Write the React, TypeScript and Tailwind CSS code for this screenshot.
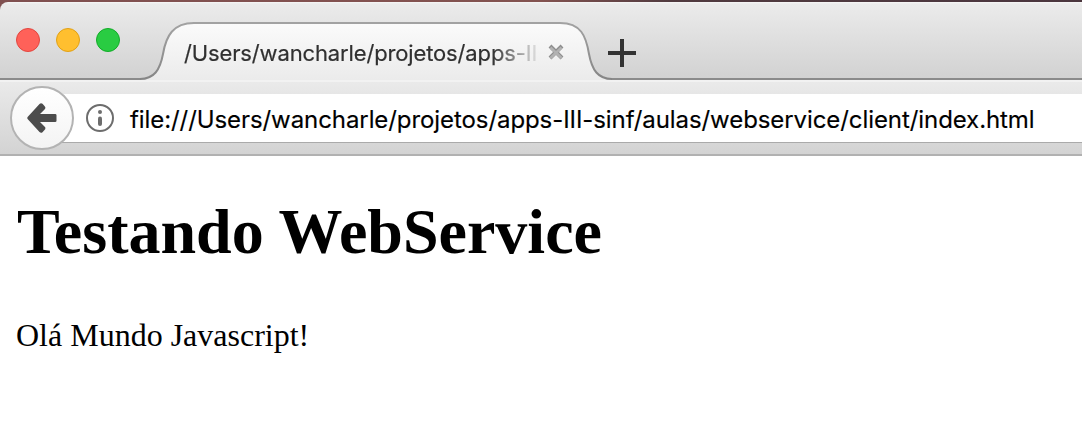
import React from "react";

function TrafficLights() {
  return (
    <div className="flex gap-4 pl-4 pt-[26px] w-[140px] shrink-0">
      <span className="size-6 rounded-full border border-[#e2463f] bg-[#ff6159]" />
      <span className="size-6 rounded-full border border-[#e1a116] bg-[#ffbf2f]" />
      <span className="size-6 rounded-full border border-[#12ac28] bg-[#29cc42]" />
    </div>
  );
}

function Tab() {
  return (
    <div className="relative h-[78px] w-[472px] shrink-0">
      <svg className="absolute left-0 top-0" width="472" height="78" viewBox="0 0 472 78" fill="none">
        <defs>
          <linearGradient id="tabFill" x1="0" y1="21" x2="0" y2="78" gradientUnits="userSpaceOnUse">
            <stop offset="0" stopColor="#fbfbfb" />
            <stop offset="1" stopColor="#ebebeb" />
          </linearGradient>
          <linearGradient id="tabStroke" x1="0" y1="21" x2="0" y2="78" gradientUnits="userSpaceOnUse">
            <stop offset="0" stopColor="#a2a2a2" />
            <stop offset="1" stopColor="#858585" />
          </linearGradient>
        </defs>
        <path
          d="M0 77C14 77 20 68 23 52C26 34 33 21 54 21H420C441 21 446 34 449 52C452 68 458 77 472 77V78H0Z"
          fill="url(#tabFill)"
        />
        <path
          d="M0 77C14 77 20 68 23 52C26 34 33 21 54 21H420C441 21 446 34 449 52C452 68 458 77 472 77"
          stroke="url(#tabStroke)"
          strokeWidth="2"
        />
      </svg>
      <div className="relative flex items-center pl-11 pt-[35px]">
        <span className="w-[354px] overflow-hidden whitespace-nowrap font-['Inter',sans-serif] text-[22px] leading-8 tracking-[-0.14px] text-[#303030] [-webkit-text-stroke:0.2px_#303030] [mask-image:linear-gradient(to_right,black_308px,transparent_358px)]">
          /Users/wancharle/projetos/apps-III
        </span>
        <svg className="ml-[10px] -mt-[3px]" width="16" height="16" viewBox="0 0 16 16">
          <path d="M2 2L14 14M14 2L2 14" stroke="#8d8d8d" strokeWidth="4" />
          <path d="M2.500 3.500L13.500 14M13.500 3.500L2.500 14" stroke="#b2b2b2" strokeWidth="2.500" />
        </svg>
      </div>
    </div>
  );
}

function TabStrip() {
  return (
    <div className="bg-[linear-gradient(to_right,#805050,#835350_50%,#513b40_62%,#4b363e)] pt-0.5">
      <div className="flex h-[78px] overflow-hidden rounded-tl-[8px] bg-[linear-gradient(to_top,#8b8b8b_2px,transparent_2px),linear-gradient(to_bottom,#f7f7f7,#ebebeb_2px,#d1d1d1)]">
        <TrafficLights />
        <Tab />
        <svg className="-ml-1 mt-[37px]" width="28" height="28" viewBox="0 0 28 28">
          <path d="M14 0V28M0 14H28" stroke="#333" strokeWidth="4" />
        </svg>
      </div>
    </div>
  );
}

function AddressBar() {
  return (
    <div className="flex h-[76px] border-b-2 border-[#b1b1b1] bg-[linear-gradient(to_bottom,#f2f2f2_2px,#eaeaea_2px,#d3d3d3)] pl-[10px] pt-[6px]">
      <div className="z-10 flex size-16 shrink-0 items-center justify-center rounded-full border-2 border-[#b3b3b3] bg-[linear-gradient(to_bottom,#ffffff,#f4f4f4)]">
        <svg width="30" height="30" viewBox="0 0 30 30" fill="none">
          <path d="M28.200 11H13L18 6Q19 4.500 17.500 3L15.500 .8Q14 -.5 12.500 1L.6 14Q0 15 .6 16L12.500 29Q14 30.500 15.500 29.200L17.500 27Q19 25.500 18 24L13 19H28.200Q29.500 19 29.500 17.700V12.300Q29.500 11 28.200 11Z" fill="#4c4c4c" />
        </svg>
      </div>
      <div className="-ml-5 mt-2 flex h-[49px] flex-1 items-center border-b border-[#aaa] bg-white pl-[32px]">
        <svg width="28" height="28" viewBox="0 0 28 28" fill="none">
          <circle cx="14" cy="14" r="13" stroke="#6d6d6d" strokeWidth="2" />
          <circle cx="14" cy="8" r="2" fill="#6d6d6d" />
          <path d="M14 14.500V20" stroke="#6d6d6d" strokeWidth="4" strokeLinecap="round" />
        </svg>
        <span className="ml-4 pt-[3px] whitespace-nowrap font-['Inter',sans-serif] text-[24px] leading-8 tracking-[-0.08px] text-black [-webkit-text-stroke:0.15px_black]">
          file:///Users/wancharle/projetos/apps-III-sinf/aulas/webservice/client/index.html
        </span>
      </div>
    </div>
  );
}

export default function App() {
  return (
    <div className="h-[430px] w-[1082px] overflow-hidden bg-white">
      <TabStrip />
      <AddressBar />
      <main className="px-4 pt-[39px] font-['Liberation_Serif',serif] text-black">
        <h1 className="pl-px text-[64px] font-bold leading-[74px]">Testando WebService</h1>
        <p className="mt-[48px] text-[32px] leading-9">Olá Mundo Javascript!</p>
      </main>
    </div>
  );
}
